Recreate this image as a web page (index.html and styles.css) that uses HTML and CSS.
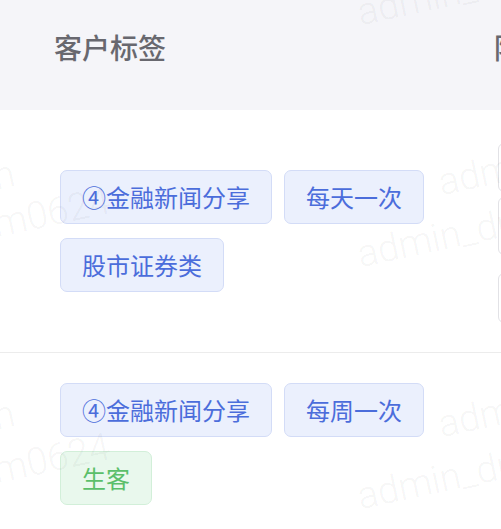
FILE: index.html
```html
<!DOCTYPE html>
<html lang="zh-CN">
<head>
<meta charset="utf-8">
<title>客户标签</title>
<link rel="stylesheet" href="styles.css">
</head>
<body>
<div class="table">
  <div class="row head">
    <div class="cell th">客户标签</div>
    <div class="cell th th2">阶段</div>
  </div>
  <div class="row body row1">
    <div class="cell tags">
      <span class="tag blue">④金融新闻分享</span>
      <span class="tag blue">每天一次</span>
      <span class="tag blue">股市证券类</span>
    </div>
    <div class="cell side">
      <span class="box b1"></span>
      <span class="box b2"></span>
      <span class="box b3"></span>
    </div>
  </div>
  <div class="row body row2">
    <div class="cell tags">
      <span class="tag blue">④金融新闻分享</span>
      <span class="tag blue">每周一次</span>
      <span class="tag green">生客</span>
    </div>
    <div class="cell side"></div>
  </div>
</div>
<div class="watermark">
  <span class="wm" style="left:362px;top:-8px">admin_dm0624</span>
  <span class="wm" style="left:443px;top:162px">admin</span>
  <span class="wm" style="left:362px;top:234px">admin_dm0624</span>
  <span class="wm" style="left:443px;top:404px">admin</span>
  <span class="wm" style="left:362px;top:476px">admin_dm0624</span>
  <span class="wm" style="left:-84px;top:174px">admin</span>
  <span class="wm" style="left:-2px;top:204px">m0624</span>
  <span class="wm" style="left:-84px;top:414px">admin</span>
  <span class="wm" style="left:-2px;top:450px">m0624</span>
</div>
</body>
</html>
```
FILE: styles.css
```css
html, body {
  margin: 0;
  padding: 0;
  background: #ffffff;
}
body {
  width: 501px;
  height: 529px;
  overflow: hidden;
  position: relative;
  font-family: "Noto Sans CJK SC", "Noto Sans", sans-serif;
}
.table {
  width: 501px;
  overflow: hidden;
}
.row {
  display: grid;
  grid-template-columns: 438px 200px;
}
.head {
  height: 110px;
  background: #f5f5f9;
  align-items: center;
}
.th {
  padding: 0 0 16px 54px;
  font-size: 28px;
  font-weight: 500;
  color: #68686f;
  line-height: 40px;
  white-space: nowrap;
}
.th2 {
  padding-left: 56px;
}
.row1 {
  height: 242px;
  border-bottom: 1px solid #ececec;
}
.row1 .tags {
  padding-top: 60px;
}
.row2 .tags {
  padding-top: 30px;
}
.tags {
  padding-left: 60px;
  display: flex;
  flex-wrap: wrap;
  align-content: flex-start;
  gap: 14px 12px;
}
.tag {
  display: inline-block;
  height: 52px;
  line-height: 52px;
  padding: 0 21px;
  border-radius: 7px;
  font-size: 24px;
  white-space: nowrap;
}
.blue {
  background: #ebf0fd;
  border: 1px solid #d3dcf7;
  color: #4b6ddb;
}
.green {
  background: #e9f8ed;
  border: 1px solid #d2efd9;
  color: #5bbf6a;
}
.side {
  padding-top: 33px;
  display: flex;
  flex-direction: column;
}
.box {
  display: block;
  width: 120px;
  border: 1px solid #e2e2e6;
  border-radius: 6px;
  background: #ffffff;
  box-sizing: border-box;
  margin-left: 60px;
}
.b1 { height: 49px; }
.b2 { height: 58px; margin-top: 5px; }
.b3 { height: 50px; margin-top: 18px; }
.watermark {
  position: absolute;
  left: 0;
  top: 0;
  width: 501px;
  height: 529px;
  pointer-events: none;
  overflow: hidden;
}
.wm {
  position: absolute;
  font-family: "Roboto", "Liberation Sans", sans-serif;
  font-weight: 300;
  font-size: 38px;
  line-height: 40px;
  color: rgba(0, 0, 0, 0.05);
  white-space: nowrap;
  transform: rotate(-12deg);
  transform-origin: 0 100%;
}
```
